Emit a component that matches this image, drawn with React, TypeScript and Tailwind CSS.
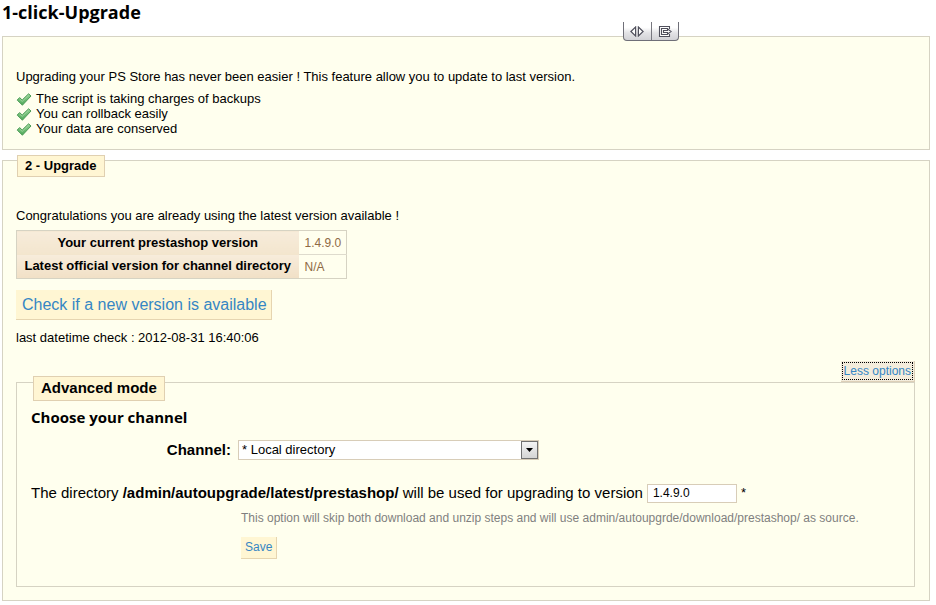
import React, { useId, useState } from 'react';

const benefits = [
  'The script is taking charges of backups',
  'You can rollback easily',
  'Your data are conserved',
];

const CheckIcon = () => {
  const id = useId();
  return (
    <svg width="16" height="14" viewBox="0 0 16 14" aria-hidden="true" className="shrink-0">
      <defs>
        <linearGradient id={id} x1="0" y1="0" x2="0" y2="1">
          <stop offset="0" stopColor="#93d093" />
          <stop offset="1" stopColor="#4fa95a" />
        </linearGradient>
      </defs>
      <path
        d="M1.2 8.1 3.6 5.6 6.2 8 12.6 1.8 15 4 6.4 13.2Z"
        fill={`url(#${id})`}
        stroke="#4b9a55"
        strokeWidth="1"
        strokeLinejoin="round"
      />
      <path d="M3.6 7 6.2 9.4 12.6 3.2" fill="none" stroke="#a9dda6" strokeWidth="0.8" />
    </svg>
  );
};

/* Small resize / detach toolbar hanging over the first panel */
const WindowTools = () => (
  <div className="absolute top-[22px] left-[623px] flex h-[19px] w-14 overflow-hidden rounded-b-[4px] border border-t-0 border-[#6f6f78] bg-linear-to-b from-white from-30% via-[#e3e3e6] via-60% to-[#d2d2d6]">
    <button type="button" aria-label="Resize" className="flex flex-1 items-center justify-center border-r border-[#77777f]">
      <svg width="14" height="11" viewBox="0 0 14 11" fill="#fff" stroke="#50505c" strokeWidth="1.2">
        <path d="M5.6 1v9L.9 5.5Z" />
        <path d="M8.4 1v9l4.7-4.5Z" />
      </svg>
    </button>
    <button type="button" aria-label="Detach" className="flex flex-1 items-center justify-center">
      <svg width="14" height="11" viewBox="0 0 14 11" fill="#fff" stroke="#50505c" strokeWidth="1.1">
        <path d="M11.5 3V.5h-10v10h10V8" />
        <path d="M9.5 3.5v-1h-6v6h6v-1" />
        <path d="M5.5 4.5h4V2.8l3.6 2.7-3.6 2.7V6.5h-4Z" />
      </svg>
    </button>
  </div>
);

const App = () => {
  const [channel, setChannel] = useState('directory');
  const [version, setVersion] = useState('1.4.9.0');

  return (
    <main className="relative pr-1.5 pb-1 pl-0.5 font-['Liberation_Sans',Arial,sans-serif] text-[13px] leading-4 text-black">
      <h1 className="h-9 font-['Open_Sans',sans-serif] text-[18px] leading-6 font-bold">1-click-Upgrade</h1>

      {/* Introduction */}
      <section className="border border-[#d6d3c3] bg-[#ffffee] px-[13px] pt-8 pb-[13px]">
        <p>Upgrading your PS Store has never been easier ! This feature allow you to update to last version.</p>
        <ul className="mt-[6px]">
          {benefits.map((benefit) => (
            <li key={benefit} className="flex h-[15px] items-center gap-1 leading-[15px]">
              <CheckIcon />
              {benefit}
            </li>
          ))}
        </ul>
      </section>
      <WindowTools />

      {/* Upgrade */}
      <fieldset className="mt-[10px] flow-root min-w-0 border border-[#d6d3c3] bg-[#ffffee] pr-[14px] pb-[13px] pl-[13px]">
        <legend className="float-left -mt-1.5 ml-px border border-[#e0d0b1] bg-[#fff6d3] px-[7px] py-0.5 font-bold">2 - Upgrade</legend>
        <p className="clear-both pt-[31px]">Congratulations you are already using the latest version available !</p>

        <table className="mt-[6px] w-[331px] border-collapse border border-[#d6d3c3]">
          <tbody>
            <tr className="h-6">
              <th className="w-[282px] bg-linear-to-b from-[#f7ecdb] to-[#f3e5cd] px-1.5">Your current prestashop version</th>
              <td className="border-b border-[#dedbcd] pl-1.5 text-[12px] text-[#8f6a45]">1.4.9.0</td>
            </tr>
            <tr className="h-6">
              <th className="bg-linear-to-b from-[#f7ecdb] to-[#f1e0c6] px-1.5">Latest official version for channel directory</th>
              <td className="pl-1.5 text-[12px] text-[#8f6a45]">N/A</td>
            </tr>
          </tbody>
        </table>

        <button type="button" className="mt-[11px] border-r border-b border-[#e6d5b0] bg-[#fff6d3] pt-[5px] pr-1 pb-1 pl-1.5 text-[16px] leading-5 text-[#3586c4]">
          Check if a new version is available
        </button>
        <p className="mt-[10px]">last datetime check : 2012-08-31 16:40:06</p>

        <div className="mt-[15px] flex justify-end">
          <button type="button" className="border-r border-b border-[#ddd0b8] bg-[#f3ecdc] p-px text-[12px] text-[#3586c4]">
            <span className="block border border-dotted border-black px-px">Less options</span>
          </button>
        </div>

        {/* Advanced mode */}
        <fieldset className="flow-root min-w-0 border border-[#d6d3c3] px-[14px] pb-[27px]">
          <legend className="float-left -mt-[7px] ml-0.5 border border-[#e0d0b1] bg-[#fff6d3] px-[7px] pt-px pb-0.5 text-[15px] leading-5 font-bold">
            Advanced mode
          </legend>
          <h3 className="clear-both pt-1.5 font-['Open_Sans',sans-serif] text-[15px] leading-5 font-bold">Choose your channel</h3>

          <div className="mt-[13px] flex items-center">
            <label htmlFor="channel" className="w-[200px] text-right text-[15px] leading-5 font-bold">
              Channel:
            </label>
            <div className="relative ml-[7px] w-[301px]">
              <select
                id="channel"
                value={channel}
                onChange={(e) => setChannel(e.target.value)}
                className="block h-5 w-full appearance-none border border-[#d8cdb8] bg-white pl-[3px] text-[13px] leading-4"
              >
                <option value="directory">* Local directory</option>
                <option value="archive">* Local archive</option>
              </select>
              <span className="pointer-events-none absolute top-px right-px flex h-[18px] w-[17px] items-center justify-center border border-[#707070] bg-linear-to-b from-[#f4f4f4] to-[#d4d4d4]">
                <svg width="7" height="4" viewBox="0 0 7 4" aria-hidden="true">
                  <path d="M0 0h7L3.5 4Z" fill="#000" />
                </svg>
              </span>
            </div>
          </div>

          <div className="mt-[23px] flex items-center text-[15px] leading-5">
            <label htmlFor="version">
              The directory <b>/admin/autoupgrade/latest/prestashop/</b> will be used for upgrading to version
            </label>
            <input
              id="version"
              type="text"
              value={version}
              onChange={(e) => setVersion(e.target.value)}
              className="ml-1 h-[19px] w-[90px] border border-[#d8cdb8] bg-white px-[5px] text-[12px] leading-4"
            />
            <span className="ml-1 text-[13px]">*</span>
          </div>

          <div className="mt-[7px] ml-[210px]">
            <p className="text-[12px] text-[#7f7f7f]">
              This option will skip both download and unzip steps and will use admin/autoupgrde/download/prestashop/ as source.
            </p>
            <button type="button" className="mt-[11px] border-r border-b border-[#e6d5b0] bg-[#fff6d3] px-1 pt-0.5 pb-[3px] text-[12px] text-[#3586c4]">
              Save
            </button>
          </div>
        </fieldset>
      </fieldset>
    </main>
  );
};

export default App;
